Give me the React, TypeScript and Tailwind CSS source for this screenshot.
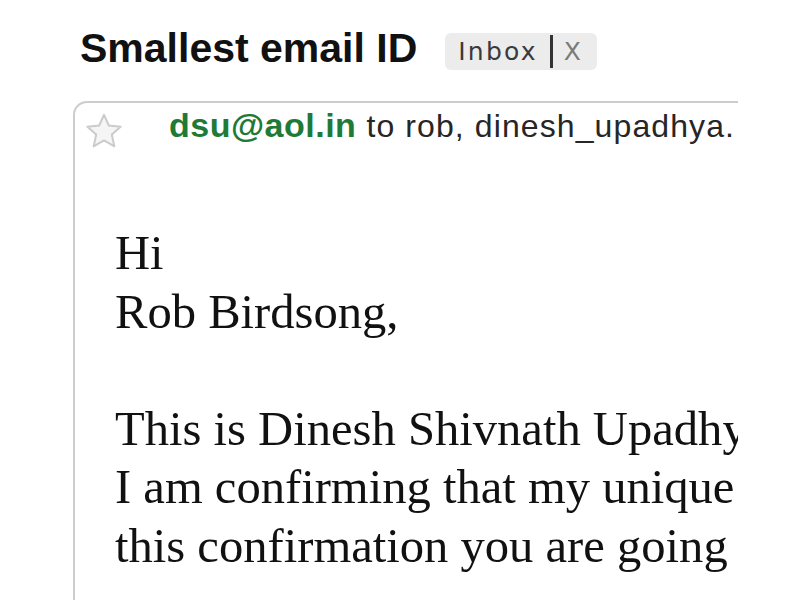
import React from "react";

// Star outline shown beside the sender
const StarIcon = () => (
  <svg width="38" height="36" viewBox="0 0 24 23" className="block">
    <polygon
      points="12,1.2 15.1,8 22.6,8.8 17,13.8 18.6,21.3 12,17.5 5.4,21.3 7,13.8 1.4,8.8 8.9,8"
      fill="#f5f5f5"
      stroke="#cbcbcb"
      strokeWidth="1.3"
      strokeLinejoin="round"
    />
  </svg>
);

// Gmail-like label chip next to the subject
const LabelChip = ({ label }: { label: string }) => (
  <div className="mt-[5px] ml-[28px] flex h-[37px] items-center rounded-[6px] bg-[#ececec] pl-[13px] pr-[16px] font-['DejaVu_Sans',sans-serif]">
    <span className="text-[25px] leading-none tracking-[2.2px] text-[#3a3a3a]">{label}</span>
    <span className="ml-[12px] h-[33px] w-[3px] bg-[#333]" />
    <span className="ml-[11px] text-[25px] leading-none text-[#7a7a7a]">X</span>
  </div>
);

const bodyLines = [
  "Hi",
  "Rob Birdsong,",
  "",
  "This is Dinesh Shivnath Upadhyaya.",
  "I am confirming that my unique email ID is dsu@aol.in.",
  "this confirmation you are going to list it as the smallest",
];

export default function App() {
  return (
    <div className="flex h-[600px] w-[800px] flex-col overflow-hidden bg-white">
      {/* Subject line */}
      <div className="flex items-start pl-[80px] pt-[28px]">
        <h1 className="font-['Liberation_Sans',Arial,sans-serif] text-[41px] font-bold leading-[41px] text-[#111]">
          Smallest email ID
        </h1>
        <LabelChip label="Inbox" />
      </div>

      {/* Message card */}
      <div className="ml-[73px] mt-[31px] w-[665px] flex-1 overflow-hidden rounded-tl-[14px] border-l-[2px] border-t-[2px] border-[#cdcdcd]">
        <div className="flex items-start">
          <div className="ml-[10px] mt-[10px]">
            <StarIcon />
          </div>
          <p className="ml-[46px] mt-[5px] whitespace-nowrap font-['Liberation_Sans',Arial,sans-serif] text-[34px] leading-[34px]">
            <span className="font-bold tracking-[0.5px] text-[#1f7a38]">dsu@aol.in</span>
            <span className="ml-[10px] text-[32px] tracking-[1.1px] text-[#262626]">to rob, dinesh_upadhya.</span>
          </p>
        </div>

        <div className="mt-[75px] pl-[40px] font-['Liberation_Serif','Times_New_Roman',serif] text-[48.6px] leading-[58.5px] text-[#111]">
          {bodyLines.map((line, i) => (
            <div key={i} className="h-[58.5px] whitespace-nowrap">
              {line}
            </div>
          ))}
        </div>
      </div>
    </div>
  );
}
